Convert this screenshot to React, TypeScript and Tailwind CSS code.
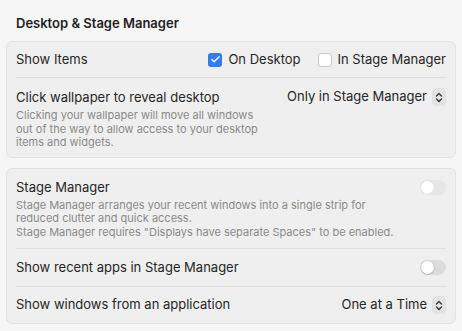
import { Check } from 'lucide-react';

function Stepper() {
  return (
    <span className="ml-[5px] inline-flex h-[18px] w-[14px] items-center justify-center rounded-[4px] bg-[#e3e3e3]">
      <svg width="8" height="11" viewBox="0 0 8 11" fill="none" stroke="#3a3a3a" strokeWidth="1.4" strokeLinecap="round" strokeLinejoin="round">
        <path d="M1.5 4 L4 1.5 L6.5 4" />
        <path d="M1.5 7 L4 9.5 L6.5 7" />
      </svg>
    </span>
  );
}

function Toggle({ disabled }: { disabled?: boolean }) {
  return (
    <span
      className={`relative inline-block h-[15px] w-[26px] rounded-full ${disabled ? 'bg-[#e6e6e6]' : 'bg-[#dcdcdc]'}`}
    >
      <span
        className={`absolute left-[1px] top-[1px] h-[13px] w-[13px] rounded-full bg-white ${disabled ? 'shadow-[0_0_1px_rgba(0,0,0,0.15)]' : 'shadow-[0_0.5px_1.5px_rgba(0,0,0,0.35)]'}`}
      />
    </span>
  );
}

export default function App() {
  return (
    <div className="h-[331px] w-[462px] overflow-hidden bg-[#f6f6f6] px-[6px] font-['Inter',sans-serif] text-[13px] text-[#262626]">
      <h1 className="px-[10px] pb-[9px] pt-[14px] text-[13px] font-semibold leading-[18px] text-[#1f1f1f]">
        Desktop &amp; Stage Manager
      </h1>

      {/* Desktop */}
      <div className="rounded-[6px] border border-[#e2e2e2] bg-[#efefef] px-[9px]">
        <div className="flex h-[36px] items-center border-b border-[#e0e0e0]">
          <span className="flex-1">Show Items</span>
          <span className="flex items-center gap-[6px]">
            <span className="flex h-[14px] w-[14px] items-center justify-center rounded-[3px] bg-[#2f7cf6]">
              <Check className="h-[11px] w-[11px] text-white" strokeWidth={3.2} />
            </span>
            On Desktop
          </span>
          <span className="ml-[17px] flex items-center gap-[6px]">
            <span className="h-[14px] w-[14px] rounded-[3px] border border-[#c9c9c9] bg-white" />
            In Stage Manager
          </span>
        </div>
        <div className="flex pb-[7px] pt-[10px]">
          <div className="flex-1">
            <div className="leading-[18px]">Click wallpaper to reveal desktop</div>
            <p className="mt-[3px] w-[250px] text-[11px] leading-[13.5px] text-[#8a8a8a]">
              Clicking your wallpaper will move all windows out of the way to allow access to your desktop items and widgets.
            </p>
          </div>
          <div className="flex h-[18px] items-center">
            Only in Stage Manager
            <Stepper />
          </div>
        </div>
      </div>

      {/* Stage Manager */}
      <div className="mt-[10px] rounded-[6px] border border-[#e2e2e2] bg-[#efefef] px-[9px]">
        <div className="flex border-b border-[#e0e0e0] pb-[9px] pt-[9px]">
          <div className="flex-1">
            <div className="leading-[18px]">Stage Manager</div>
            <p className="mt-[3px] text-[11px] leading-[13.5px] text-[#8a8a8a]">
              Stage Manager arranges your recent windows into a single strip for
              <br />
              reduced clutter and quick access.
              <br />
              Stage Manager requires "Displays have separate Spaces" to be enabled.
            </p>
          </div>
          <div className="pt-[2px]">
            <Toggle disabled />
          </div>
        </div>
        <div className="flex h-[38px] items-center border-b border-[#e0e0e0]">
          <span className="flex-1">Show recent apps in Stage Manager</span>
          <Toggle />
        </div>
        <div className="flex h-[36px] items-center">
          <span className="flex-1">Show windows from an application</span>
          One at a Time
          <Stepper />
        </div>
      </div>
    </div>
  );
}
